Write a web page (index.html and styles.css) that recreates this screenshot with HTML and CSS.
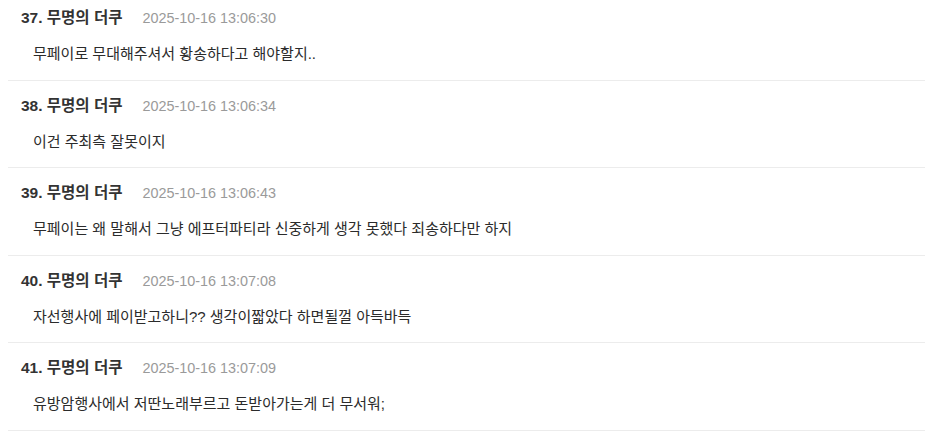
FILE: index.html
```html
<!DOCTYPE html>
<html lang="ko">
<head>
<meta charset="utf-8">
<link rel="stylesheet" href="styles.css">
</head>
<body>
<ul class="comments">
  <li class="comment">
    <div class="head"><span class="name">37. 무명의 더쿠</span><span class="date">2025-10-16 13:06:30</span></div>
    <p class="text">무페이로 무대해주셔서 황송하다고 해야할지..</p>
  </li>
  <li class="comment">
    <div class="head"><span class="name">38. 무명의 더쿠</span><span class="date">2025-10-16 13:06:34</span></div>
    <p class="text">이건 주최측 잘못이지</p>
  </li>
  <li class="comment">
    <div class="head"><span class="name">39. 무명의 더쿠</span><span class="date">2025-10-16 13:06:43</span></div>
    <p class="text">무페이는 왜 말해서 그냥 에프터파티라 신중하게 생각 못했다 죄송하다만 하지</p>
  </li>
  <li class="comment">
    <div class="head"><span class="name">40. 무명의 더쿠</span><span class="date">2025-10-16 13:07:08</span></div>
    <p class="text">자선행사에 페이받고하니?? 생각이짧았다 하면될껄 아득바득</p>
  </li>
  <li class="comment">
    <div class="head"><span class="name">41. 무명의 더쿠</span><span class="date">2025-10-16 13:07:09</span></div>
    <p class="text">유방암행사에서 저딴노래부르고 돈받아가는게 더 무서워;</p>
  </li>
</ul>
</body>
</html>
```

FILE: styles.css
```css
html, body {
  margin: 0;
  padding: 0;
  background: #ffffff;
  overflow: hidden;
}
body {
  font-family: "Liberation Sans", "Noto Sans CJK KR", sans-serif;
  color: #2b2b2b;
}
.comments {
  list-style: none;
  margin: -7px 0 0 8px;
  padding: 0;
}
.comment {
  padding: 14px 0 14.5px 13px;
  border-bottom: 1px solid #ececec;
}
.head {
  display: flex;
  align-items: center;
  gap: 20px;
  height: 22px;
  line-height: 22px;
}
.name {
  font-size: 15.5px;
  font-weight: 700;
  color: #333333;
}
.date {
  font-size: 14.4px;
  color: #9a9a9a;
}
.text {
  margin: 14px 0 0 12px;
  font-size: 15px;
  line-height: 22px;
  color: #2b2b2b;
}
```
